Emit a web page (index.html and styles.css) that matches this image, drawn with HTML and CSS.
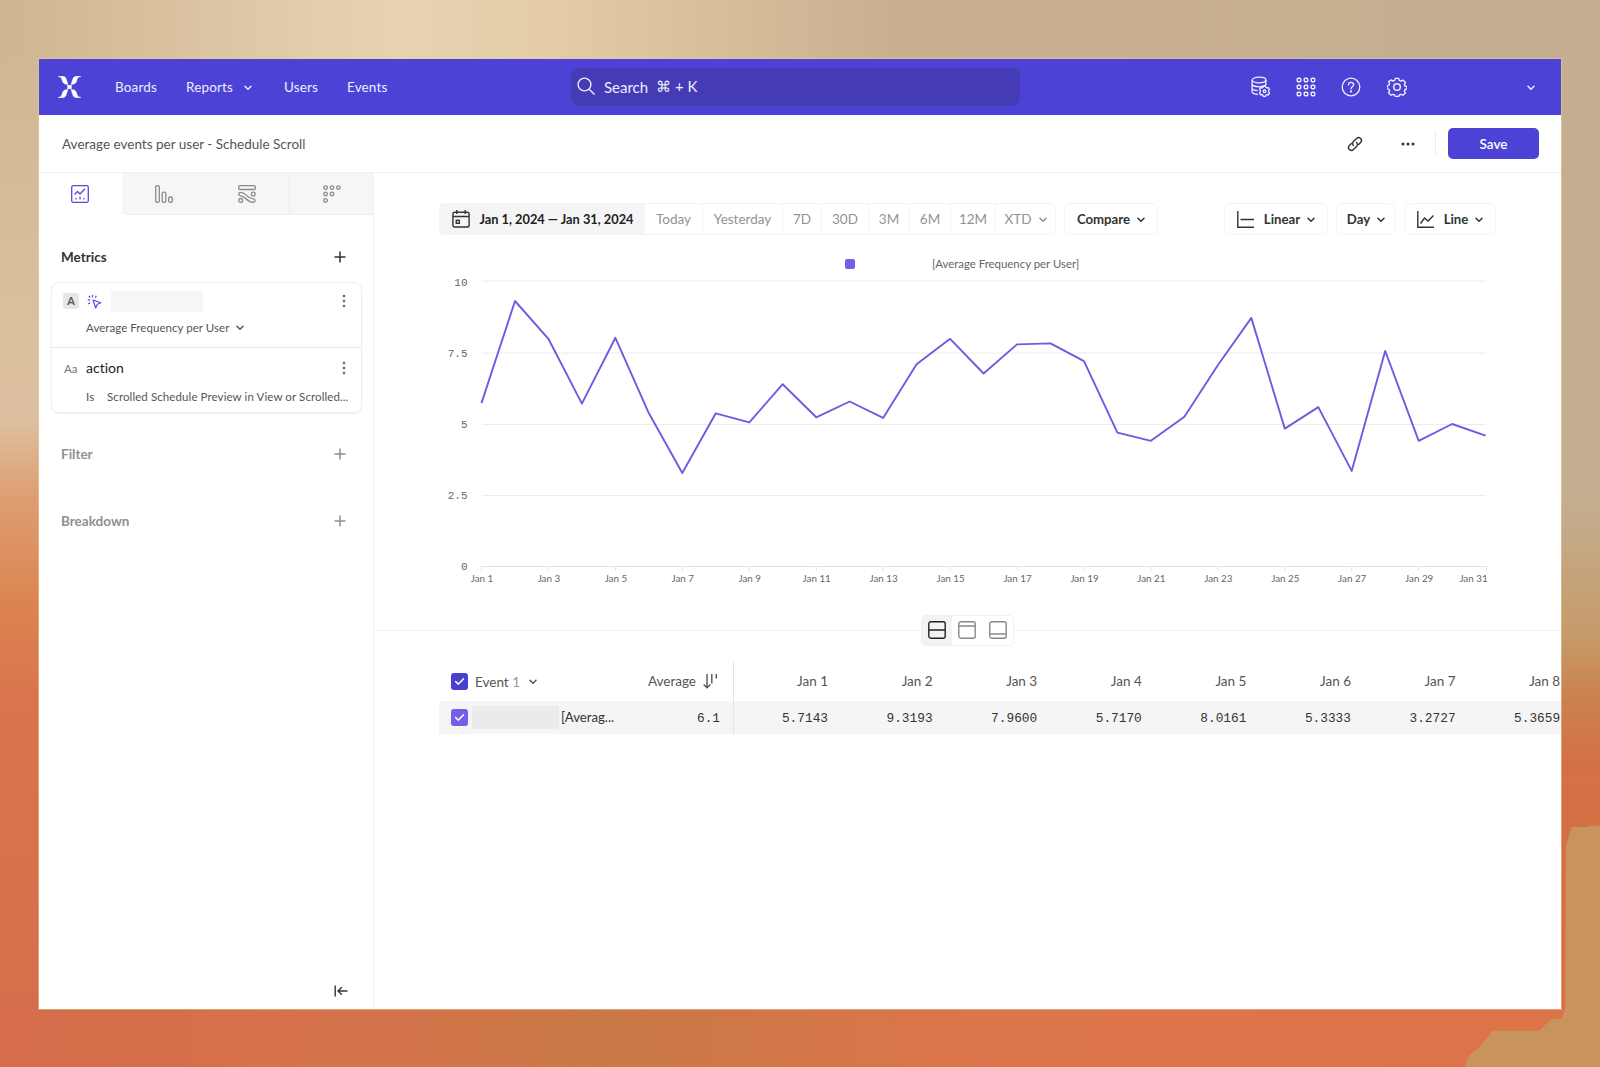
FILE: index.html
```html
<!DOCTYPE html>
<html lang="en">
<head>
  <meta charset="UTF-8">
  <meta name="viewport" content="width=device-width, initial-scale=1.0">
  <title>Average events per user - Schedule Scroll</title>
  <link rel="stylesheet" href="styles.css">
</head>
<body>
  <svg class="corner" width="160" height="250" viewBox="0 0 160 250"><path fill="#c8935c" d="M131.700 10H149V8.700H160V250H24.700L29.300 238L40 229.700L52.700 213.700H99L111.700 201.700H122.700V198L125 193L125.700 29.700L128.300 21.300Z"/></svg>

  <svg class="defs">
    <symbol id="chev" viewBox="0 0 8 6"><path d="M1 1.300l3 3 3-3" fill="none" stroke="currentColor" stroke-width="1.500" stroke-linecap="round" stroke-linejoin="round"/></symbol>
    <symbol id="plus" viewBox="0 0 12 12"><path d="M6 .5v11M.5 6h11" fill="none" stroke="currentColor" stroke-width="1.500"/></symbol>
    <symbol id="kebab" viewBox="0 0 4 14"><g fill="currentColor"><circle cx="2" cy="2" r="1.300"/><circle cx="2" cy="7" r="1.300"/><circle cx="2" cy="12" r="1.300"/></g></symbol>
    <symbol id="check" viewBox="0 0 17 17"><path d="M4.700 8.600l2.700 2.500 5-5.200" fill="none" stroke="#fff" stroke-width="1.500" stroke-linecap="round" stroke-linejoin="round"/></symbol>
    <symbol id="gear" viewBox="-10 -10 20 20"><path d="M-1.700-8.600h3.400l.7 2 1.600.7 2-1 2.400 2.400-1 2 .7 1.600 2 .7v1.800l-2 .9-.7 1.600 1 1.900L6 8.200l-2-.9-1.600.7-.7 1.500h-3.400L-2.400 8-4 7.300l-2 .9-2.400-2.400 1-1.900-.7-1.600-1.700-.7v-2.800l1.700-.7.7-1.600-1-1.900L-6-7l2 1 1.600-.7z" fill="none" stroke="currentColor" stroke-width="1.400" stroke-linejoin="round"/><circle r="3.300" fill="none" stroke="currentColor" stroke-width="1.500"/></symbol>
  </svg>

  <div class="window">
    <header class="topbar">
      <svg class="logo" width="23" height="22" viewBox="0 0 23 22" fill="#fff" stroke="#fff" stroke-width=".5"><path d="M.5.3h3.600c2.600 0 3.500 1 4.300 3.400l1.500 4.700c-2.900 0-4.700-.8-5.500-3.500L3.700 2.700C3.300 1.400 2.200.9.500.8zM22.500.3h-3.600c-2.600 0-3.500 1-4.300 3.400l-1.500 4.700c2.900 0 4.700-.8 5.500-3.500l.7-2.200c.4-1.300 1.500-1.800 3.200-1.900zM.5 21.700h3.600c2.600 0 3.500-1 4.300-3.400l1.500-4.700c-2.900 0-4.700.8-5.500 3.500l-.7 2.200c-.4 1.300-1.500 1.800-3.200 1.900zM22.500 21.700h-3.600c-2.600 0-3.500-1-4.300-3.400l-1.500-4.700c2.900 0 4.700.8 5.500 3.500l.7 2.200c.4 1.300 1.500 1.800 3.200 1.900z"/><rect x="9.700" y="9.200" width="3.600" height="3.600"/></svg>
      <nav class="nav">
        <a class="nav-boards">Boards</a>
        <a class="nav-reports">Reports <svg width="8" height="6"><use href="#chev"/></svg></a>
        <a class="nav-users">Users</a>
        <a>Events</a>
      </nav>
      <div class="search">
        <svg width="19" height="19" viewBox="0 0 19 19" fill="none" stroke="currentColor" stroke-width="1.400"><circle cx="7.500" cy="7.500" r="6.400"/><path d="M12.200 12.200l5.300 5.300"/></svg>
        <span>Search</span><span class="keys">⌘ + K</span>
      </div>
      <div class="top-icons">
        <svg width="20" height="22" viewBox="0 0 20 22" fill="none" stroke="currentColor" stroke-width="1.300"><ellipse cx="8" cy="4" rx="6.900" ry="2.800"/><path d="M1.100 4v11.500c0 1.500 2.600 2.700 6 2.900M14.900 4v5M1.100 8c0 1.500 3 2.800 6.900 2.800s6.900-1.300 6.900-2.800M1.100 12c0 1.400 2.600 2.500 5.600 2.700"/><path d="M12.400 10.200h2.200l.5 1.300 1 .5 1.300-.3 1.100 1.900-.9 1.100v1.100l.9 1.100-1.100 1.900-1.300-.3-1 .6-.5 1.300h-2.200l-.5-1.300-1-.6-1.300.3-1.100-1.900.9-1.100v-1.100l-.9-1.100 1.100-1.900 1.300.3 1-.5z" stroke-linejoin="round"/><circle cx="13.500" cy="15.300" r="1.300"/></svg>
        <svg width="20" height="20" viewBox="0 0 20 20" fill="none" stroke="currentColor" stroke-width="1.400"><g id="dots"><rect x="1.200" y="1.200" width="3.600" height="3.600" rx="1.200"/><rect x="8.200" y="1.200" width="3.600" height="3.600" rx="1.200"/><rect x="15.200" y="1.200" width="3.600" height="3.600" rx="1.200"/></g><use href="#dots" y="7"/><use href="#dots" y="14"/></svg>
        <svg width="20" height="20" viewBox="0 0 20 20" fill="none" stroke="currentColor" stroke-width="1.300"><circle cx="10" cy="10" r="8.800"/><path d="M7.400 8c0-1.700 1.100-2.700 2.600-2.700s2.600 1 2.600 2.400c0 1.900-2.600 2-2.600 4.100" stroke-linecap="round"/><circle cx="10" cy="14.400" r=".5" fill="currentColor"/></svg>
        <svg width="20" height="20"><use href="#gear"/></svg>
      </div>
      <svg class="account" width="8" height="6"><use href="#chev"/></svg>
    </header>

    <div class="titlebar">
      <h1>Average events per user - Schedule Scroll</h1>
      <div class="title-actions">
        <svg width="16" height="16" viewBox="0 0 16 16" fill="none" stroke="#333" stroke-width="1.400" stroke-linecap="round"><path d="M6.400 9.600a2.800 2.800 0 0 1 0-4L9.600 2.400a2.800 2.800 0 0 1 4 4l-2 2M9.600 6.400a2.800 2.800 0 0 1 0 4l-3.200 3.200a2.800 2.800 0 0 1-4-4l2-2"/></svg>
        <svg width="14" height="4" viewBox="0 0 14 4" fill="#333"><circle cx="2" cy="2" r="1.500"/><circle cx="7" cy="2" r="1.500"/><circle cx="12" cy="2" r="1.500"/></svg>
        <button class="save">Save</button>
      </div>
    </div>

    <div class="content">
      <aside class="sidebar">
        <div class="tabs">
          <div class="tab active"><svg width="18" height="18" viewBox="0 0 18 18" fill="none" stroke="currentColor" stroke-width="1.300"><rect x=".7" y=".7" width="16.600" height="16.600" rx="1.500"/><path d="M3.500 9.500l3-3 2.500 2.500 5-5.200M5 13v1.500M9 11.500v3M13 13v1.500"/></svg></div>
          <div class="tab"><svg width="18" height="18" viewBox="0 0 18 18" fill="none" stroke="currentColor" stroke-width="1.300"><rect x=".7" y=".7" width="3.600" height="16.600" rx="1.300"/><rect x="7.200" y="7.200" width="3.600" height="10.100" rx="1.300"/><rect x="13.700" y="12" width="3.600" height="5.300" rx="1.300"/></svg></div>
          <div class="tab"><svg width="18" height="18" viewBox="0 0 18 18" fill="none" stroke="currentColor" stroke-width="1.300"><rect x=".7" y=".7" width="16.600" height="3.800" rx="1.300"/><path d="M2.500 7.300c6 0 6 6.500 12.800 6.500a1.700 1.700 0 0 1 0 3.500C8 17.300 8 10.800 2.500 10.800a1.700 1.700 0 0 1 0-3.500z"/><circle cx="15.300" cy="9" r="1.900"/><circle cx="2.700" cy="15.400" r="1.900"/></svg></div>
          <div class="tab last"><svg width="18" height="18" viewBox="0 0 18 18" fill="none" stroke="currentColor" stroke-width="1.300"><circle cx="2.600" cy="2.600" r="1.800"/><circle cx="9" cy="2.600" r="1.800"/><circle cx="15.400" cy="2.600" r="1.800"/><circle cx="2.600" cy="9" r="1.800"/><circle cx="9" cy="9" r="1.800"/><circle cx="2.600" cy="15.400" r="1.800"/></svg></div>
        </div>

        <div class="section metrics"><span>Metrics</span><svg width="12" height="12"><use href="#plus"/></svg></div>

        <div class="card">
          <div class="metric">
            <div class="line">
              <span class="badge">A</span>
              <svg class="click" width="15" height="15" viewBox="0 0 15 15" fill="none" stroke="#5a4ad8" stroke-width="1.200" stroke-linejoin="round"><path d="M6 6l7.800 2.800-3.500 1.500L8.700 14z"/><path d="M5.500 3.300V1M8.200 3.700l1.200-2M3.300 3.700L1.900 2M3 6.200L.8 5.600M3.200 8.600l-2 1.300"/></svg>
              <span class="blank"></span>
              <svg class="kebab" width="4" height="14"><use href="#kebab"/></svg>
            </div>
            <div class="measure">Average Frequency per User <svg width="8" height="6"><use href="#chev"/></svg></div>
          </div>
          <div class="property">
            <div class="line">
              <span class="type">Aa</span>
              <span class="prop-name">action</span>
              <svg class="kebab" width="4" height="14"><use href="#kebab"/></svg>
            </div>
            <div class="condition"><span class="is">Is</span><span class="value">Scrolled Schedule Preview in View or Scrolled...</span></div>
          </div>
        </div>

        <div class="section filter"><span>Filter</span><svg width="12" height="12"><use href="#plus"/></svg></div>
        <div class="section breakdown"><span>Breakdown</span><svg width="12" height="12"><use href="#plus"/></svg></div>

        <svg class="collapse" width="14" height="12" viewBox="0 0 14 12" fill="none" stroke="#333" stroke-width="1.400"><path d="M1.200 .5v11M3.800 6H13.500M7.800 2.200L4 6l3.800 3.800"/></svg>
      </aside>

      <main class="main">
        <div class="toolbar">
          <div class="range">
            <div class="date"><svg width="18" height="18" viewBox="0 0 18 18" fill="none" stroke="#333" stroke-width="1.400"><rect x=".9" y="2.200" width="16.200" height="14.800" rx="1.800"/><path d="M1 6.500h16M4.800 0v4M13.200 0v4"/><rect x="4.300" y="10.300" width="3" height="3"/></svg><span>Jan 1, 2024 — Jan 31, 2024</span></div>
            <div class="r-today">Today</div>
            <div class="r-yesterday">Yesterday</div>
            <div class="r-7d">7D</div>
            <div class="r-30d">30D</div>
            <div class="r-3m">3M</div>
            <div class="r-6m">6M</div>
            <div class="r-12m">12M</div>
            <div class="r-xtd">XTD <svg width="8" height="6"><use href="#chev"/></svg></div>
          </div>
          <div class="btn compare">Compare <svg width="8" height="6"><use href="#chev"/></svg></div>
          <div class="btn linear"><svg class="ico" width="17" height="17" viewBox="0 0 17 17" fill="none" stroke="#333" stroke-width="1.400"><path d="M.8 0v16.200H17M3.500 8.500H17"/></svg>Linear <svg width="8" height="6"><use href="#chev"/></svg></div>
          <div class="btn day">Day <svg width="8" height="6"><use href="#chev"/></svg></div>
          <div class="btn linetype"><svg class="ico" width="17" height="17" viewBox="0 0 17 17" fill="none" stroke="#333" stroke-width="1.400"><path d="M.8 0v16.200H17M3.500 12.500l4-5.500 3.500 3 5.500-5.500"/></svg>Line <svg width="8" height="6"><use href="#chev"/></svg></div>
        </div>

        <div class="legend"><i></i><span>[Average Frequency per User]</span></div>

        <svg class="chart" width="1059" height="318" viewBox="0 22 1059 318">
          <g class="grid">
            <path d="M43 31H1047M43 103H1047M43 174.500H1047M43 245.500H1047"/>
            <path class="axis" d="M42.500 321V316.500H1047.500V321M109.400 317v4M176.400 317v4M243.300 317v4M310.300 317v4M377.200 317v4M444.100 317v4M511.100 317v4M578 317v4M645 317v4M711.900 317v4M778.800 317v4M845.800 317v4M912.700 317v4M979.700 317v4"/>
          </g>
          <g class="ylabels">
            <text x="28.500" y="35.500">10</text>
            <text x="28.500" y="106.500">7.5</text>
            <text x="28.500" y="178">5</text>
            <text x="28.500" y="249">2.5</text>
            <text x="28.500" y="320">0</text>
          </g>
          <g class="xlabels">
            <text x="43" y="332">Jan 1</text>
            <text x="109.900" y="332">Jan 3</text>
            <text x="176.900" y="332">Jan 5</text>
            <text x="243.800" y="332">Jan 7</text>
            <text x="310.800" y="332">Jan 9</text>
            <text x="377.700" y="332">Jan 11</text>
            <text x="444.600" y="332">Jan 13</text>
            <text x="511.600" y="332">Jan 15</text>
            <text x="578.500" y="332">Jan 17</text>
            <text x="645.500" y="332">Jan 19</text>
            <text x="712.400" y="332">Jan 21</text>
            <text x="779.300" y="332">Jan 23</text>
            <text x="846.300" y="332">Jan 25</text>
            <text x="913.200" y="332">Jan 27</text>
            <text x="980.200" y="332">Jan 29</text>
            <text x="1034.500" y="332">Jan 31</text>
          </g>
          <polyline class="series" points="42.500,153.100 76,51 109.400,88.800 142.900,153.600 176.400,87.800 209.900,163.300 243.300,223 276.800,163.300 310.300,172.400 343.700,134.200 377.200,167.300 410.700,151.500 444.100,167.900 477.600,114.300 511.100,88.800 544.600,123.500 578,94.400 611.500,93.400 645,111.200 678.400,182.700 711.900,190.800 745.400,166.800 778.800,115.300 812.300,67.900 845.800,178.600 879.300,157.100 912.700,220.900 946.200,101 979.700,190.800 1013.100,174 1046.600,185.700"/>
        </svg>

        <div class="splitter">
          <div class="views">
            <div class="view on"><svg width="18" height="18" viewBox="0 0 18 18"><rect x=".8" y=".8" width="16.400" height="16.400" rx="2"/><path d="M1 9h16"/></svg></div>
            <div class="view"><svg width="18" height="18" viewBox="0 0 18 18"><rect x=".8" y=".8" width="16.400" height="16.400" rx="2"/><path d="M1 5h16"/></svg></div>
            <div class="view"><svg width="18" height="18" viewBox="0 0 18 18"><rect x=".8" y=".8" width="16.400" height="16.400" rx="2"/><path d="M1 13h16"/></svg></div>
          </div>
        </div>

        <div class="table">
          <div class="row head">
            <div class="fixed">
              <span class="box"><svg width="17" height="17"><use href="#check"/></svg></span>
              <span class="event">Event <em>1</em></span>
              <svg class="event-chev" width="8" height="6"><use href="#chev"/></svg>
              <span class="avg">Average</span>
              <svg width="15" height="15" viewBox="0 0 15 15" fill="none" stroke="#555" stroke-width="1.400"><path d="M4 0v13.500M.7 10.500L4 13.800l3.300-3.300M8.800 0v9.500M13.300 0v4.500"/></svg>
            </div>
            <div class="cell">Jan 1</div><div class="cell">Jan 2</div><div class="cell">Jan 3</div><div class="cell">Jan 4</div>
            <div class="cell">Jan 5</div><div class="cell">Jan 6</div><div class="cell">Jan 7</div><div class="cell">Jan 8</div>
          </div>
          <div class="row data">
            <div class="fixed">
              <span class="box light"><svg width="17" height="17"><use href="#check"/></svg></span>
              <span class="blank"></span>
              <span class="name">[Averag...</span>
              <span class="avg">6.1</span>
            </div>
            <div class="cell">5.7143</div><div class="cell">9.3193</div><div class="cell">7.9600</div><div class="cell">5.7170</div>
            <div class="cell">8.0161</div><div class="cell">5.3333</div><div class="cell">3.2727</div><div class="cell">5.3659</div>
          </div>
        </div>
      </main>
    </div>
  </div>
</body>
</html>
```
FILE: styles.css
```css
* {
  box-sizing: border-box;
}
body {
  margin: 0;
  width: 1600px;
  height: 1067px;
  overflow: hidden;
  padding: 59px 39px 57px;
  font-family: Lato, "Liberation Sans", sans-serif;
  font-size: 14px;
  font-variant-ligatures: none;
  color: #333;
  background:
    linear-gradient(90deg, #cfb592 0, #e8d3b1 400px, #e3cba6 560px, #c8b08f 900px, #c5ae90 100%) 0 0 / 100% 59px no-repeat,
    linear-gradient(90deg, #d66c4c 0, #d4734a 380px, #c97845 600px, #dd754b 1000px, #dd7348 100%) 0 1009px / 100% 58px no-repeat,
    linear-gradient(#cfb592 0, #d8c09c 300px, #dec0a0 420px, #dd9d72 500px, #dc8551 600px, #d9744c 700px, #d66c4c 100%) 0 0 / 60px 100% no-repeat,
    linear-gradient(#c5ae90 0, #c4ae90 500px, #c69a68 640px, #cb8450 690px, #d37145 760px, #dc6c44 100%) 100% 0 / 60px 100% no-repeat;
}
.corner {
  position: absolute;
  right: 0;
  bottom: 0;
}
.defs {
  position: absolute;
  width: 0;
  height: 0;
}
.window {
  position: relative;
  width: 1522px;
  height: 950px;
  background: #fff;
  box-shadow: 0 0 0 1px rgba(235,205,155,0.5);
  display: flex;
  flex-direction: column;
  overflow: hidden;
}

/* Top bar */
.topbar {
  height: 56px;
  flex: none;
  background: #4c43d6;
  color: #efedff;
  display: flex;
  align-items: center;
  padding-bottom: 1px;
}
.logo {
  margin-left: 19px;
}
.nav {
  display: flex;
  width: 458px;
  margin-left: 34px;
  font-size: 13.5px;
  letter-spacing: 0.15px;
}
.nav a {
  display: flex;
  align-items: center;
}
.nav svg {
  margin: 2px 0 0 11px;
}
.nav-boards {
  width: 71px;
}
.nav-reports {
  width: 98px;
}
.nav-users {
  width: 63px;
}
.search {
  width: 449px;
  height: 38px;
  margin: 1px 0 0 -2px;
  border-radius: 8px;
  background: #453cb5;
  display: flex;
  align-items: center;
  padding: 0 0 1px 6px;
  font-size: 15px;
}
.search span {
  margin-left: 8px;
}
.top-icons {
  display: flex;
  align-items: center;
  margin-left: 231px;
  gap: 25.2px;
}
.account {
  margin: 2px 0 0 120px;
}

/* Title bar */
.titlebar {
  height: 58px;
  flex: none;
  border-bottom: 1px solid #f1f1f1;
  display: flex;
  align-items: center;
  justify-content: space-between;
  padding: 0 22px 0 23px;
}
h1 {
  margin: 0;
  font-size: 13.5px;
  font-weight: normal;
  color: #555;
}
.title-actions {
  display: flex;
  align-items: center;
  gap: 38px;
}
.save {
  position: relative;
  width: 91px;
  height: 31px;
  margin-left: -5px;
  border: none;
  border-radius: 5px;
  background: #4c43d6;
  color: #fff;
  font: 600 13.5px Lato, sans-serif;
}
.save::before {
  content: "";
  position: absolute;
  left: -13px;
  top: 3px;
  width: 1px;
  height: 25px;
  background: #ececec;
}

.content {
  flex: 1;
  display: flex;
  min-height: 0;
}

/* Sidebar */
.sidebar {
  width: 335px;
  flex: none;
  border-right: 1px solid #f1f1f1;
  display: flex;
  flex-direction: column;
}
.tabs {
  display: flex;
  height: 42px;
}
.tab {
  width: 84px;
  background: #f6f6f6;
  border-bottom: 1px solid #eee;
  color: #8b8b8b;
  display: flex;
  align-items: center;
  justify-content: center;
}
.tab.active {
  width: 83px;
  background: #fff;
  border: none;
  color: #5a4ad8;
}
.tab.active + .tab {
  border-radius: 0 0 0 5px;
}
.tab.last {
  border-left: 1px solid #ebebeb;
}
.section {
  display: flex;
  align-items: center;
  justify-content: space-between;
  height: 20px;
  padding: 0 27px 0 22px;
  font-weight: bold;
  font-size: 13.5px;
  color: #8f8f8f;
}
.section span {
  margin-top: -1px;
}
.metrics {
  margin-top: 32px;
  color: #333;
}
.filter {
  margin-top: 31px;
}
.breakdown {
  margin-top: 47px;
}
.card {
  width: 311px;
  height: 131px;
  margin: 15px 0 0 12px;
  border: 1px solid #efefef;
  border-radius: 8px;
  box-shadow: 0 1px 2px rgba(0,0,0,0.07);
}
.metric {
  height: 65px;
  border-bottom: 1px solid #e9e9e9;
  padding-top: 7px;
}
.property {
  padding-top: 9px;
}
.line {
  display: flex;
  align-items: center;
  height: 22px;
  padding: 0 15px 0 11px;
}
.badge {
  width: 16px;
  height: 16px;
  border-radius: 3px;
  background: #e6e6e6;
  font: bold 11px/15px Lato, sans-serif;
  text-align: center;
  color: #555;
}
.click {
  margin-left: 8px;
}
.line .blank {
  width: 92px;
  height: 21px;
  margin-left: 9px;
  background: #f6f6f6;
}
.kebab {
  margin-left: auto;
  color: #666;
}
.measure {
  display: flex;
  align-items: center;
  margin: 8px 0 0 34px;
  font-size: 11.5px;
  letter-spacing: 0.05px;
  line-height: 16px;
  color: #555;
}
.measure svg {
  margin-left: 7px;
}
.type {
  width: 23px;
  padding-left: 1px;
  font-size: 11.5px;
  color: #777;
}
.prop-name {
  margin-top: -2px;
  font-size: 14px;
  color: #222;
}
.condition {
  display: flex;
  margin: 10px 0 0 34px;
  font-size: 11.5px;
  letter-spacing: 0.1px;
  line-height: 16px;
  color: #555;
}
.is {
  width: 21px;
}
.value {
  white-space: nowrap;
}
.collapse {
  margin: auto 25px 12px auto;
}

/* Report */
.main {
  flex: 1;
  min-width: 0;
  overflow: hidden;
}
.toolbar {
  display: flex;
  margin: 30px 0 0 65px;
  height: 32px;
  width: 1057px;
}
.range {
  display: flex;
  width: 617px;
  border: 1px solid #f4f4f4;
  border-radius: 7px;
  font-size: 13.5px;
  color: #929292;
}
.range > div {
  display: flex;
  align-items: center;
  justify-content: center;
  border-left: 1px solid #f4f4f4;
  padding-bottom: 1px;
  white-space: nowrap;
}
.range .date {
  width: 204px;
  background: #f5f5f5;
  color: #222;
  font-weight: bold;
  font-size: 12.8px;
  border: none;
}
.date svg {
  margin: 1px 9px 0 2px;
}
.r-today { width: 58px; }
.r-yesterday { width: 80px; }
.r-7d { width: 39px; }
.r-30d { width: 47px; }
.r-3m { width: 41px; }
.r-6m { width: 41px; }
.r-12m { width: 45px; }
.r-xtd { width: 60px; }
.r-xtd svg {
  margin: 2px 0 0 7px;
}
.btn {
  display: flex;
  align-items: center;
  justify-content: center;
  border: 1px solid #f4f4f4;
  border-radius: 7px;
  font-weight: bold;
  font-size: 13.2px;
  margin-left: 8px;
  padding-bottom: 1px;
}
.btn svg {
  margin: 2px 0 0 7px;
}
.btn .ico {
  margin: 1px 10px 0 0;
}
.compare { width: 94px; }
.linear { width: 104px; margin-left: auto; }
.day { width: 60px; }
.linetype { width: 92px; }
.legend {
  display: flex;
  align-items: center;
  height: 18px;
  margin: 20px 0 0 471px;
  font-size: 11.4px;
  color: #666;
}
.legend i {
  width: 10px;
  height: 10px;
  border-radius: 2px;
  background: #7360e8;
}
.legend span {
  margin: -1px 0 0 77px;
}
.chart {
  display: block;
  margin: -1px 0 0 65px;
}
.grid path {
  fill: none;
  stroke: #ececec;
}
.grid .axis {
  stroke: #e2e2e2;
}
.ylabels text {
  font: 11px "Liberation Mono", monospace;
  fill: #666;
  text-anchor: end;
}
.xlabels text {
  font-size: 9.8px;
  fill: #666;
  text-anchor: middle;
}
.series {
  fill: none;
  stroke: #6b5ce0;
  stroke-width: 1.9;
  stroke-linejoin: round;
}
.splitter {
  display: flex;
  align-items: center;
  margin-top: 25px;
  height: 31px;
}
.splitter::before,
.splitter::after {
  content: "";
  height: 1px;
  background: #f0f0f0;
  width: 547px;
}
.views {
  display: flex;
  width: 94px;
  height: 31px;
  border: 1px solid #f0f0f0;
  border-radius: 5px;
  overflow: hidden;
}
.view {
  flex: 1;
  display: flex;
  align-items: center;
  justify-content: center;
  padding-bottom: 2px;
}
.view svg {
  fill: none;
  stroke: #888;
  stroke-width: 1.4;
}
.view.on {
  background: #f3f3f3;
}
.view.on svg {
  stroke: #222;
}

/* Data table */
.table {
  margin: 16px 0 0 65px;
  width: 1122px;
}
.row {
  display: flex;
}
.row > div {
  flex: none;
}
.head {
  height: 39px;
  font-size: 13.5px;
  color: #555;
}
.data {
  height: 33px;
  background: #f5f5f5;
}
.fixed {
  display: flex;
  align-items: center;
  width: 295px;
  border-right: 1px solid #e4e4e4;
  padding: 0 13px 0 12px;
}
.head .fixed {
  padding-right: 15px;
}
.box {
  display: flex;
  width: 17px;
  height: 17px;
  border-radius: 3px;
  background: #4a40cf;
}
.box.light {
  background: #7360e8;
}
.event {
  margin-left: 7px;
}
.event em {
  font-style: normal;
  color: #999;
}
.event-chev {
  margin-left: 9px;
}
.avg {
  margin-left: auto;
}
.head .avg {
  margin: -1px 7px 0 auto;
}
.fixed .blank {
  width: 87px;
  height: 23px;
  margin-left: 4px;
  background: #ebebeb;
}
.name {
  margin-left: 2px;
  margin-top: -1px;
  font-size: 13.2px;
}
.cell {
  width: 104.600px;
  display: flex;
  align-items: center;
  justify-content: flex-end;
}
.head .cell {
  padding-bottom: 2px;
}
.fixed + .cell {
  width: 94px;
}
.data .cell,
.data .avg {
  padding-top: 1px;
  font-family: "Liberation Mono", monospace;
  font-size: 12.8px;
}
```
